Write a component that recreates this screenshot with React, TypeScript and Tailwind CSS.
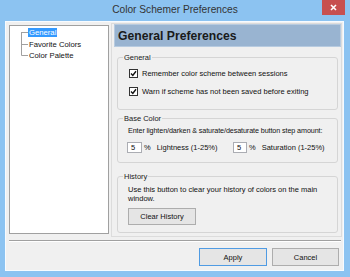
import React from "react";

const font = { fontFamily: '"Liberation Sans", Arial, sans-serif' };

function Check() {
  return (
    <div className="w-[9px] h-[9px] border border-[#333333] bg-white flex items-center justify-center shrink-0">
      <svg width="7" height="7" viewBox="0 0 7 7">
        <path d="M1 3.6 L2.8 5.4 L6 1.3" fill="none" stroke="#111" strokeWidth="1.4" />
      </svg>
    </div>
  );
}

function Group({ title, className, children }: { title: string; className: string; children: React.ReactNode }) {
  return (
    <fieldset className={"ml-[5px] w-[221px] border border-[#d5d5d5] rounded-[3px] " + className}>
      <legend className="ml-[5px] px-[1px] leading-[9px] text-[#1a1a1a]">{title}</legend>
      {children}
    </fieldset>
  );
}

export default function App() {
  return (
    <div className="w-[350px] h-[277px] bg-[#8cc3f1] flex flex-col text-[7.5px] text-[#111]" style={font}>
      <div className="relative h-[21px] flex items-center justify-center">
        <span className="text-[10.2px] text-[#333333] leading-[12px] -mt-[1px]">Color Schemer Preferences</span>
        <div className="absolute top-0 right-[5px] w-[23px] h-[15px] bg-[#c75050] flex items-center justify-center">
          <svg width="7" height="7" viewBox="0 0 7 7">
            <path d="M1 1 L6 6 M6 1 L1 6" stroke="#fff" strokeWidth="1.6" />
          </svg>
        </div>
      </div>
      <div className="ml-[5px] w-[339px] h-[250px] border border-[#f7fbff] bg-[#f0f0f0] flex flex-col">
        <div className="flex h-[215px]">
          <div className="ml-[3px] mt-[3px] w-[100px] h-[209px] border border-[#a0a0a0] bg-white flex">
            <svg width="18" height="36" className="shrink-0">
              <path d="M11.5 6 V29.5 M11.5 6.5 H18 M11.5 18.5 H18 M11.5 29.5 H18" stroke="#a0a0a0" strokeWidth="1" fill="none" />
            </svg>
            <div className="flex flex-col pt-[1px]">
              <div className="h-[11.5px] flex items-center">
                <span className="bg-[#3399ff] text-white leading-[9px] px-[1px] text-[7.7px]">General</span>
              </div>
              <div className="h-[11.5px] flex items-center">
                <span className="leading-[9px] px-[1px] text-[7.7px]">Favorite Colors</span>
              </div>
              <div className="h-[11.5px] flex items-center">
                <span className="leading-[9px] px-[1px] text-[7.7px]">Color Palette</span>
              </div>
            </div>
          </div>
          <div className="ml-[2px] mt-[1px] w-[231px] h-[214px] border border-[#dcdcdc] flex flex-col">
            <div className="ml-[2px] w-[227px] h-[23px] bg-[#99b4d1] border border-[#b7cbe0] flex items-center pl-[3px]">
              <span className="text-[12.2px] font-bold text-[#1a1a1a] leading-[14px]">General Preferences</span>
            </div>
            <Group title="General" className="mt-[6px] h-[57px]">
              <div className="pl-[11px] pt-[7px] flex flex-col gap-[9px]">
                <div className="flex items-center gap-[4px] h-[9px]">
                  <Check />
                  <span className="leading-[9px]">Remember color scheme between sessions</span>
                </div>
                <div className="flex items-center gap-[4px] h-[9px]">
                  <Check />
                  <span className="leading-[9px]">Warn if scheme has not been saved before exiting</span>
                </div>
              </div>
            </Group>
            <Group title="Base Color" className="mt-[4px] h-[49px]">
              <div className="pl-[10px] pt-[3px] leading-[9px] whitespace-nowrap text-[7.2px] tracking-[-0.1px]">
                Enter lighten/darken &amp; saturate/desaturate button step amount:
              </div>
              <div className="pl-[9px] mt-[7px] flex items-center">
                <div className="w-[106px] flex items-center">
                  <div className="w-[15px] h-[11px] border border-[#abadb3] bg-white pl-[3px] leading-[9px]">5</div>
                  <span className="ml-[2px]">%</span>
                  <span className="ml-[6px]">Lightness (1-25%)</span>
                </div>
                <div className="flex items-center">
                  <div className="w-[14px] h-[11px] border border-[#abadb3] bg-white pl-[3px] leading-[9px]">5</div>
                  <span className="ml-[2px]">%</span>
                  <span className="ml-[6px]">Saturation (1-25%)</span>
                </div>
              </div>
            </Group>
            <Group title="History" className="mt-[9px] h-[61px]">
              <div className="pl-[10px] pt-[4px] leading-[9px]">
                <div>Use this button to clear your history of colors on the main</div>
                <div>window.</div>
              </div>
              <div className="pl-[10px] mt-[5px]">
                <div className="w-[68px] h-[17px] border border-[#adadad] bg-[#e5e5e5] flex items-center justify-center leading-[9px]">
                  Clear History
                </div>
              </div>
            </Group>
          </div>
        </div>
        <div className="ml-[3px] mt-[3px] w-[332px] h-[2px] border-t border-[#a0a0a0] border-b border-b-white" />
        <div className="flex justify-end pr-[4px] mt-[6px] gap-[5px]">
          <div className="w-[68px] h-[18px] border border-[#4f9be3] bg-[#e5e5e5] flex items-center justify-center leading-[9px]">
            Apply
          </div>
          <div className="w-[67px] h-[18px] border border-[#adadad] bg-[#e5e5e5] flex items-center justify-center leading-[9px]">
            Cancel
          </div>
        </div>
      </div>
    </div>
  );
}
